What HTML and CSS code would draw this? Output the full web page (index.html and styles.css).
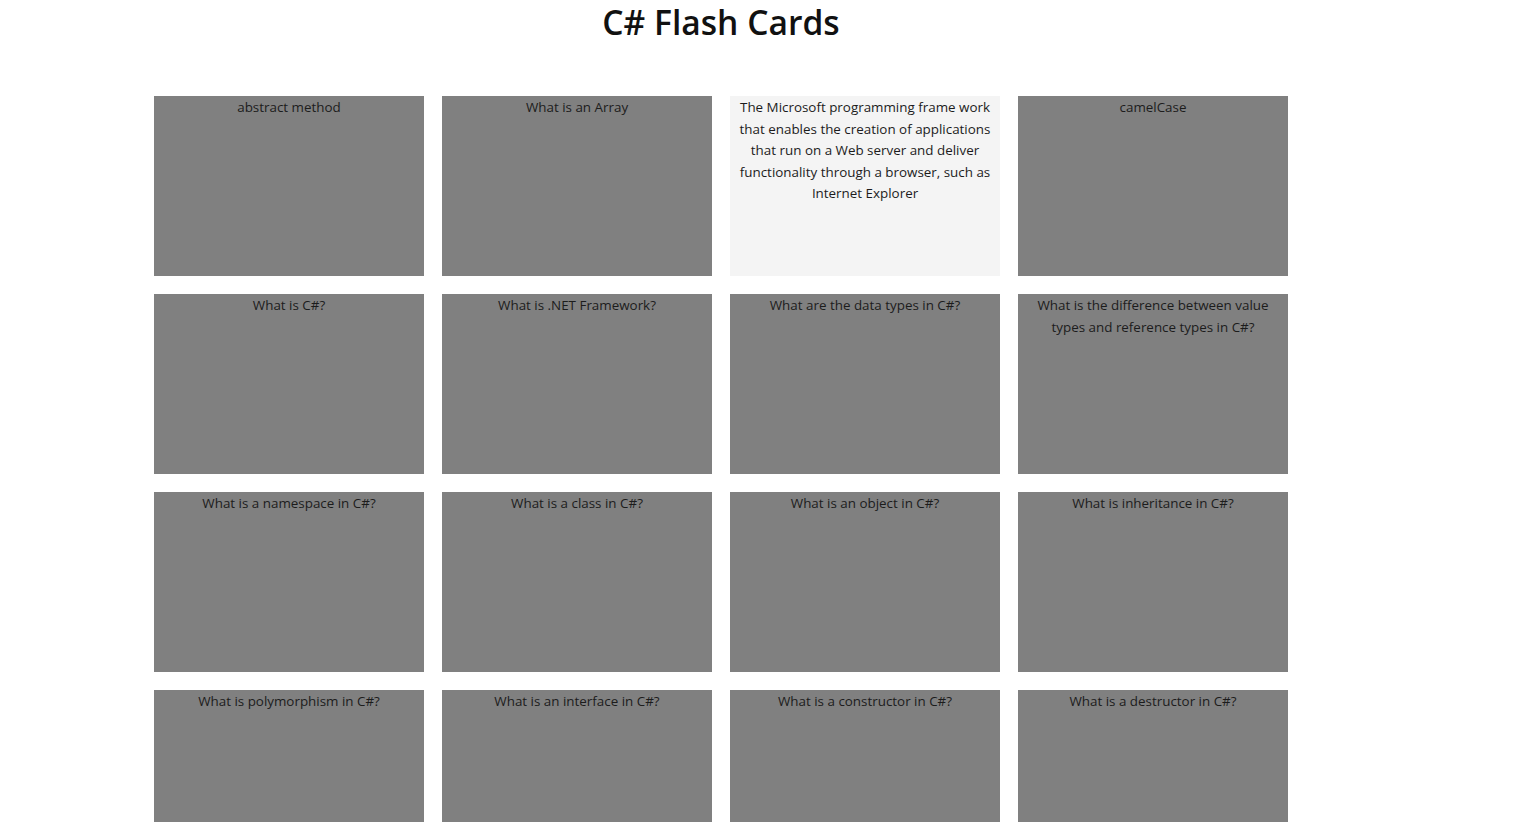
FILE: index.html
```html
<!DOCTYPE html>
<html>
<head>
<meta charset="utf-8">
<link rel="stylesheet" href="styles.css">
<title>C# Flash Cards</title>
</head>
<body>
<div class="page">
  <h1 class="title">C# Flash Cards</h1>
  <div class="grid">
    <div class="card">abstract method</div>
    <div class="card">What is an Array</div>
    <div class="card flipped">The Microsoft programming frame work that enables the creation of applications that run on a Web server and deliver functionality through a browser, such as Internet Explorer</div>
    <div class="card">camelCase</div>
    <div class="card">What is C#?</div>
    <div class="card">What is .NET Framework?</div>
    <div class="card">What are the data types in C#?</div>
    <div class="card">What is the difference between value types and reference types in C#?</div>
    <div class="card">What is a namespace in C#?</div>
    <div class="card">What is a class in C#?</div>
    <div class="card">What is an object in C#?</div>
    <div class="card">What is inheritance in C#?</div>
    <div class="card">What is polymorphism in C#?</div>
    <div class="card">What is an interface in C#?</div>
    <div class="card">What is a constructor in C#?</div>
    <div class="card">What is a destructor in C#?</div>
  </div>
</div>
</body>
</html>
```
FILE: styles.css
```css
html, body {
  margin: 0;
  padding: 0;
  background: #fff;
}
body {
  font-family: "Open Sans", "Noto Sans", sans-serif;
  color: #1a1a1a;
}
.page {
  width: 1134px;
  margin-left: 154px;
}
.title {
  margin: 0 0 52px;
  font-size: 33.6px;
  font-weight: 600;
  text-align: center;
  line-height: 44px;
  color: #111;
}
.grid {
  display: grid;
  grid-template-columns: repeat(4, 270px);
  gap: 18px;
}
.card {
  height: 180px;
  box-sizing: border-box;
  padding: 1px 6px 0;
  background: #808080;
  text-align: center;
  font-size: 13.4px;
  line-height: 21.6px;
  color: #1c1c1c;
}
.card.flipped {
  background: #f4f4f4;
}
```
